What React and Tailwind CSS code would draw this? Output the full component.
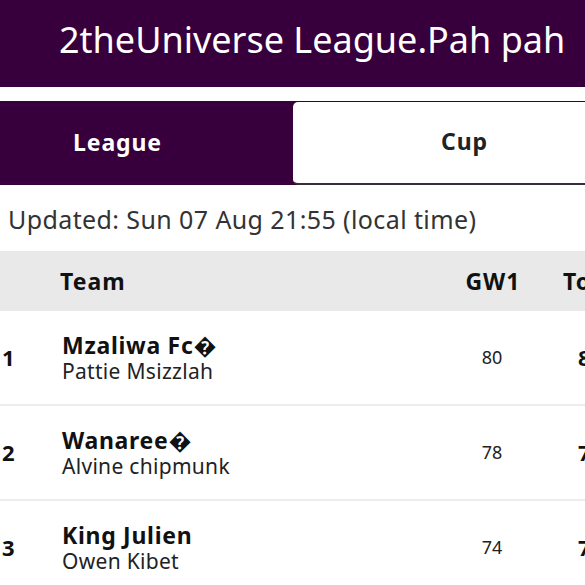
import React from 'react';

const rows = [
  { rank: 1, team: 'Mzaliwa Fc\uFFFD', manager: 'Pattie Msizzlah', gw: 80, total: 80 },
  { rank: 2, team: 'Wanaree\uFFFD', manager: 'Alvine chipmunk', gw: 78, total: 78 },
  { rank: 3, team: 'King Julien', manager: 'Owen Kibet', gw: 74, total: 74 },
];

export default function App() {
  return (
    <div className="w-[585px] h-[585px] overflow-hidden bg-white font-['Noto_Sans',sans-serif]">
      <div className="h-[87px] bg-[#37003c] flex items-center pl-[59px] pb-[8px]">
        <h1 className="text-[36px] text-white whitespace-nowrap">2theUniverse League.Pah pah</h1>
      </div>
      <div className="h-[14px]" />
      <div className="flex h-[84px] bg-[#37003c] border-t border-[#37003c] w-[640px]">
        <button className="w-[293px] flex items-center pl-[73px] pb-[2px] text-[23px] font-bold tracking-[0.9px] text-white">League</button>
        <button className="flex-1 flex items-center pl-[148px] pb-[2px] text-[23px] font-bold tracking-[0.9px] text-[#222] bg-white rounded-l-[5px] border-b-2 border-[#3a2a3a]">Cup</button>
      </div>
      <div className="h-[66px] flex items-center pl-[8px] pt-[4px] text-[25px] tracking-[0.4px] text-[#333] whitespace-nowrap">
        Updated: Sun 07 Aug 21:55 (local time)
      </div>
      <div className="w-[640px]">
        <div className="flex items-center h-[60px] bg-[#e9e9e9] text-[23px] font-bold tracking-[1px] text-[#111]">
          <div className="w-[60px]" />
          <div className="w-[402px]">Team</div>
          <div className="w-[62px] text-center">GW1</div>
          <div className="w-[58px] pl-[39px] whitespace-nowrap">Total</div>
        </div>
        {rows.map((r) => (
          <div key={r.rank} className="flex items-center h-[95px] border-b-2 border-[#ececec] text-[#111]">
            <div className="w-[62px] pl-[2px] text-[22px] font-bold">{r.rank}</div>
            <div className="w-[400px] flex flex-col">
              <span className="text-[23px] font-bold tracking-[0.7px] leading-[28px]">{r.team}</span>
              <span className="text-[21px] tracking-[0.3px] leading-[25px] text-[#222]">{r.manager}</span>
            </div>
            <div className="w-[60px] text-center text-[18px] text-[#222]">{r.gw}</div>
            <div className="w-[58px] pl-[56px] text-[22px] font-bold">{r.total}</div>
          </div>
        ))}
      </div>
    </div>
  );
}
